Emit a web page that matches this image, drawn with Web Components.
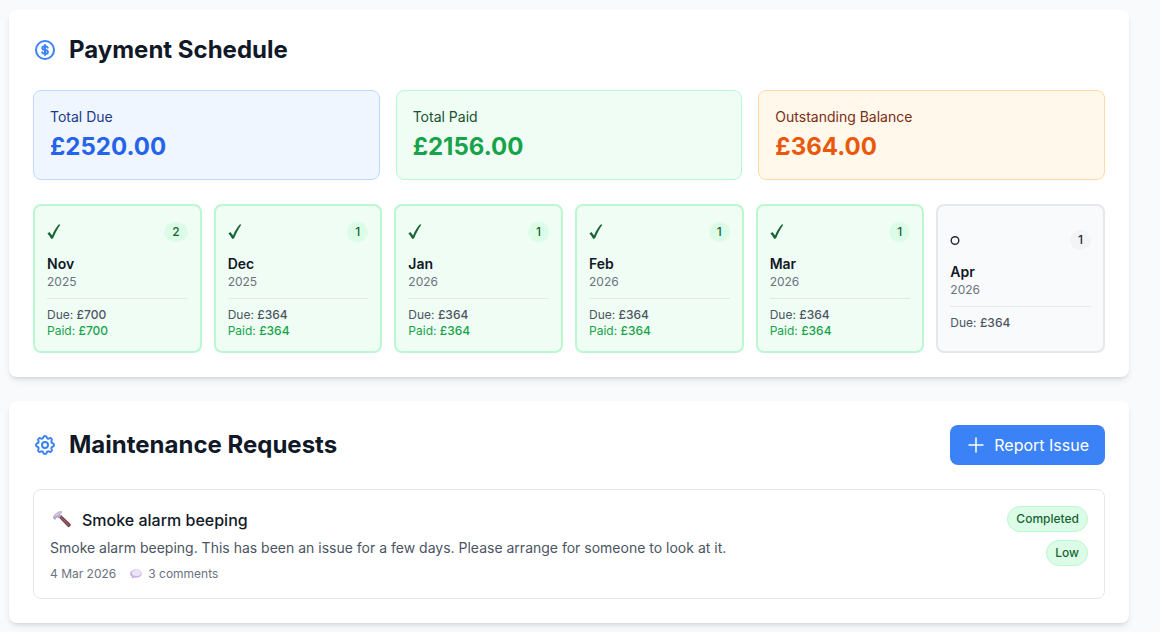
<!DOCTYPE html>
<html lang="en">
<head>
<meta charset="utf-8">
<meta name="viewport" content="width=device-width, initial-scale=1">
<title>Payments and maintenance</title>
<style>
  body {
    margin: 0;
    padding: 10px 31px 9px 9px;
    background: #f9fafb;
    color: #111827;
    font: 14px/20px Inter, "Liberation Sans", sans-serif;
  }
  main { display: grid; gap: 24px; }
</style>
</head>
<body>
<main>
  <section-card heading="Payment Schedule">
    <svg slot="icon" width="24" height="24" viewBox="0 0 24 24" fill="none" stroke="#3b82f6" stroke-width="2" stroke-linecap="round" aria-hidden="true">
      <circle cx="12" cy="12" r="9"/>
      <path d="M14.800 9.600c-.4-.9-1.500-1.400-2.800-1.400-1.600 0-2.800.7-2.800 1.900S10.400 11.800 12 12s2.900.7 2.900 1.900S13.600 15.800 12 15.800c-1.400 0-2.500-.5-2.900-1.400M12 7v10"/>
    </svg>
    <payment-totals></payment-totals>
    <payment-months></payment-months>
  </section-card>

  <section-card heading="Maintenance Requests">
    <svg slot="icon" width="24" height="24" viewBox="0 0 24 24" fill="none" stroke="#3b82f6" stroke-width="2" stroke-linejoin="round" aria-hidden="true">
      <path d="M10.325 4.317c.426-1.756 2.924-1.756 3.350 0a1.724 1.724 0 002.573 1.066c1.543-.940 3.310.826 2.370 2.370a1.724 1.724 0 001.065 2.572c1.756.426 1.756 2.924 0 3.350a1.724 1.724 0 00-1.066 2.573c.940 1.543-.826 3.310-2.370 2.370a1.724 1.724 0 00-2.572 1.065c-.426 1.756-2.924 1.756-3.350 0a1.724 1.724 0 00-2.573-1.066c-1.543.940-3.310-.826-2.370-2.370a1.724 1.724 0 00-1.065-2.572c-1.756-.426-1.756-2.924 0-3.350a1.724 1.724 0 001.066-2.573c-.940-1.543.826-3.310 2.370-2.370.996.608 2.296.070 2.572-1.065z"/>
      <circle cx="12" cy="12" r="3"/>
    </svg>
    <report-button slot="action">Report Issue</report-button>
    <maintenance-request date="4 Mar 2026" comments="3 comments">
      <span slot="title">Smoke alarm beeping</span>
      Smoke alarm beeping. This has been an issue for a few days. Please arrange for someone to look at it.
      <status-pill slot="status">Completed</status-pill>
      <status-pill slot="status">Low</status-pill>
    </maintenance-request>
  </section-card>
</main>

<script>
  class BaseElement extends HTMLElement {
    connectedCallback() {
      if (this.shadowRoot) return;
      this.attachShadow({ mode: 'open' }).innerHTML =
        `<style>*{box-sizing:border-box}h2,h3,p{margin:0}svg{display:block;flex:none}${this.styles()}</style>${this.markup()}`;
    }
  }

  customElements.define('section-card', class extends BaseElement {
    styles() {
      return `
        :host { display: block; min-width: 0; padding: 24px; background: #fff; border-radius: 8px;
          box-sizing: border-box;
          box-shadow: 0 4px 6px -1px rgb(0 0 0 / .1), 0 2px 4px -2px rgb(0 0 0 / .1); }
        header { display: flex; align-items: center; justify-content: space-between; gap: 16px; margin-bottom: 24px; }
        .heading { display: flex; align-items: center; gap: 12px; }
        h2 { font-size: 24px; line-height: 32px; font-weight: 700; }
        .content { display: grid; gap: 24px; }`;
    }
    markup() {
      return `<header><div class="heading"><slot name="icon"></slot><h2>${this.getAttribute('heading')}</h2></div>
        <slot name="action"></slot></header><div class="content"><slot></slot></div>`;
    }
  });

  customElements.define('total-box', class extends BaseElement {
    styles() {
      return `
        :host { display: block; box-sizing: border-box; padding: 16px; border: 1px solid; border-radius: 8px; }
        :host([tone=blue]) { background: #eff6ff; border-color: #bfdbfe; --label: #1e3a8a; --value: #2563eb; }
        :host([tone=green]) { background: #f0fdf4; border-color: #bbf7d0; --label: #14532d; --value: #16a34a; }
        :host([tone=orange]) { background: #fff8eb; border-color: #fcdca4; --label: #7c2d12; --value: #ea580c; }
        .label { margin-bottom: 4px; color: var(--label); }
        .value { font-size: 24px; line-height: 32px; font-weight: 700; color: var(--value); }`;
    }
    markup() {
      return `<p class="label">${this.getAttribute('label')}</p><p class="value"><slot></slot></p>`;
    }
  });

  customElements.define('payment-totals', class extends BaseElement {
    styles() {
      return `:host { display: grid; grid-template-columns: repeat(3, minmax(0, 1fr)); gap: 16px; }`;
    }
    markup() {
      return `<total-box tone="blue" label="Total Due">£2520.00</total-box>
        <total-box tone="green" label="Total Paid">£2156.00</total-box>
        <total-box tone="orange" label="Outstanding Balance">£364.00</total-box>`;
    }
  });

  customElements.define('month-tile', class extends BaseElement {
    styles() {
      return `
        :host { display: grid; --bg: #f9fafb; --edge: #e5e7eb; --pill: #f3f4f6; --ink: #1f2937; }
        :host([paid]) { --bg: #f0fdf4; --edge: #bbf7d0; --pill: #dcfce7; --ink: #166534; }
        button { font: inherit; text-align: left; color: #111827; background: var(--bg);
          border: 2px solid var(--edge); border-radius: 8px; padding: 12px; cursor: pointer; }
        span { display: block; }
        .top { display: flex; align-items: center; justify-content: space-between; margin-bottom: 8px; color: var(--ink); }
        .count { padding: 2px 8px; border-radius: 10px; background: var(--pill); font-size: 12px; line-height: 16px; font-weight: 500; }
        .month { font-weight: 600; }
        .year { font-size: 12px; line-height: 16px; color: #6b7280; }
        .sums { margin-top: 8px; padding-top: 8px; border-top: 1px solid #e5e7eb; font-size: 12px; line-height: 16px; color: #4b5563; }
        .paid { color: #16a34a; }
        b { font-weight: 500; }`;
    }
    markup() {
      const a = name => this.getAttribute(name);
      const mark = a('paid')
        ? '<path d="M.400 15.400l2-1.300 2.700 3.300C7 12.700 9.300 9 12 6.200l1.300.5C10.600 10.800 8.300 15 6.100 20.300l-1.800.7C3.200 18.900 1.900 17 .400 15.400z" fill="currentColor"/>'
        : '<circle cx="5" cy="14.500" r="3.800" fill="none" stroke="currentColor" stroke-width="1.400"/>';
      return `<button type="button">
        <span class="top"><svg width="14" height="28" viewBox="0 0 14 28" role="img" aria-label="${a('paid') ? 'Paid' : 'Not yet paid'}">${mark}</svg><span class="count">${a('count')}</span></span>
        <span class="month">${a('month')}</span><span class="year">${a('year')}</span>
        <span class="sums"><span>Due: <b>${a('due')}</b></span>${a('paid') ? `<span class="paid">Paid: <b>${a('paid')}</b></span>` : ''}</span>
      </button>`;
    }
  });

  customElements.define('payment-months', class extends BaseElement {
    styles() {
      return `:host { display: grid; grid-template-columns: repeat(6, minmax(0, 1fr)); gap: 12px; }`;
    }
    markup() {
      return [
        ['Nov', 2025, 2, '£700', '£700'], ['Dec', 2025, 1, '£364', '£364'], ['Jan', 2026, 1, '£364', '£364'],
        ['Feb', 2026, 1, '£364', '£364'], ['Mar', 2026, 1, '£364', '£364'], ['Apr', 2026, 1, '£364', '']
      ].map(([month, year, count, due, paid]) =>
        `<month-tile month="${month}" year="${year}" count="${count}" due="${due}" ${paid ? `paid="${paid}"` : ''}></month-tile>`
      ).join('');
    }
  });

  customElements.define('report-button', class extends BaseElement {
    styles() {
      return `
        :host { display: block; }
        button { display: flex; align-items: center; gap: 8px; padding: 8px 16px; border: 0; border-radius: 8px;
          background: #3b82f6; color: #fff; font: inherit; font-size: 16px; line-height: 24px; cursor: pointer; }`;
    }
    markup() {
      return `<button type="button"><svg width="20" height="20" viewBox="0 0 20 20" stroke="#fff" stroke-width="1.5" stroke-linecap="round" aria-hidden="true"><path d="M10 3v14M3 10h14"/></svg><span><slot></slot></span></button>`;
    }
  });

  customElements.define('status-pill', class extends BaseElement {
    styles() {
      return `:host { display: block; padding: 4px 8px; border: 1px solid #bbf7d0; border-radius: 13px;
        background: #dcfce7; color: #166534; font-size: 12px; line-height: 16px; font-weight: 500; }`;
    }
    markup() { return `<slot></slot>`; }
  });

  customElements.define('maintenance-request', class extends BaseElement {
    styles() {
      return `
        :host { display: block; }
        article { display: flex; justify-content: space-between; gap: 16px; padding: 16px; border: 1px solid #e5e7eb; border-radius: 8px; }
        .title { display: flex; align-items: center; gap: 8px; margin-bottom: 4px; }
        h3 { font-size: 16px; line-height: 28px; font-weight: 500; }
        .text { color: #4b5563; }
        .meta { display: flex; gap: 12px; margin-top: 8px; font-size: 12px; line-height: 16px; color: #6b7280; }
        .comments { display: flex; gap: 4px; }
        .status { display: flex; flex-direction: column; align-items: flex-end; gap: 8px; }`;
    }
    markup() {
      return `<article>
        <div>
          <div class="title">
            <svg width="24" height="24" viewBox="0 0 24 24" aria-hidden="true">
              <path d="M8.600 9.200l2.500-2.300 9.500 9.200c.9 1.200-1.400 3.800-2.600 2.900z" fill="#7d4650"/>
              <path d="M10.200 8.500l8.900 8.900" stroke="#a0656c" stroke-width="1"/>
              <path d="M2.800 9.700C4.500 6 7.600 3.200 11.600 3l.3 1.600-2 2 1.500 1.200-2.900 2.800-1.500-1.400-2 2.900z" fill="#b3a8c4"/>
              <path d="M3.800 9C5.500 6 8 4 11.300 3.500L8 7.200z" fill="#d3cae2"/>
            </svg>
            <h3><slot name="title"></slot></h3>
          </div>
          <p class="text"><slot></slot></p>
          <div class="meta"><span>${this.getAttribute('date')}</span>
            <span class="comments"><svg width="16" height="16" viewBox="0 0 16 16" aria-hidden="true">
              <path d="M8.200 3.500c3.200 0 5.600 1.700 5.600 4s-2.400 4.200-5.600 4.200c-.8 0-1.500-.1-2.200-.3-.7.700-1.700 1-2.700.9.500-.5.700-1.100.6-1.800C2.700 9.800 2 8.700 2 7.500c0-2.300 2.900-4 6.200-4z" fill="#c9b3e6"/>
              <ellipse cx="8.500" cy="7" rx="4.600" ry="2.900" fill="#ece5f5"/>
            </svg>${this.getAttribute('comments')}</span></div>
        </div>
        <div class="status"><slot name="status"></slot></div>
      </article>`;
    }
  });
</script>
</body>
</html>
